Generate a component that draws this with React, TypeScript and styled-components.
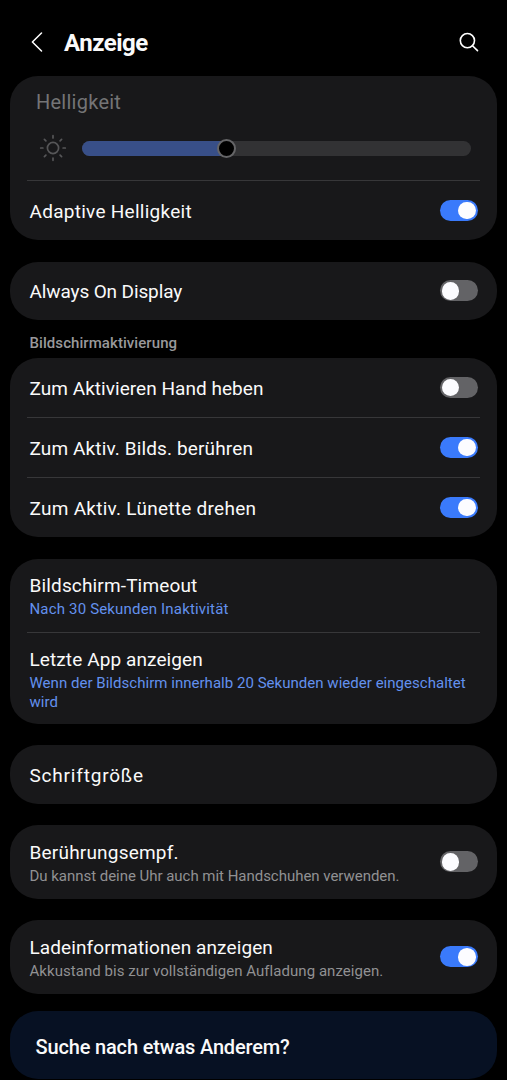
import React, { useState } from 'react';
import styled, { createGlobalStyle } from 'styled-components';

const GlobalStyle = createGlobalStyle`
  * { box-sizing: border-box; }
  html, body { margin: 0; padding: 0; background: #000; }
  body { font-family: Roboto, "Noto Sans", sans-serif; color: #fafafa; }
`;

const Page = styled.main`
  width: 507px;
  height: 1080px;
  padding: 0 10.5px 1px 10px;
  display: flex;
  flex-direction: column;
  overflow: hidden;
  background: #000;
`;

const Header = styled.header`
  height: 76px;
  flex: none;
  display: flex;
  align-items: center;
  padding: 10px 17.5px 0 21px;
`;

const BackIcon = styled.svg`
  width: 12px;
  height: 20px;
  margin-top: -2px;
`;

const SearchIcon = styled.svg`
  width: 20px;
  height: 20px;
  margin: -2px 0 0 auto;
`;

const Title = styled.h1<{ $track?: number }>`
  margin: 0 0 0 21px;
  font-size: 24px;
  line-height: 30px;
  font-weight: 700;
  letter-spacing: ${p => p.$track ?? 0}px;
`;

const Card = styled.section<{ $h: number; $gap?: number; $blue?: boolean }>`
  flex: none;
  height: ${p => p.$h}px;
  margin-top: ${p => p.$gap ?? 0}px;
  padding: 0 17px;
  border-radius: 28px;
  background: ${p => (p.$blue ? '#071123' : '#18181a')};
  display: flex;
  flex-direction: column;
`;

const Row = styled.div<{ $line?: boolean; $h?: number }>`
  flex: ${p => (p.$h ? `0 0 ${p.$h}px` : '1')};
  min-height: 0;
  display: flex;
  align-items: center;
  padding: 0 2px 0 2.5px;
  border-top: ${p => (p.$line ? '1px solid #373739' : 'none')};
`;

const Texts = styled.div<{ $drop?: number }>`
  flex: 1;
  display: flex;
  flex-direction: column;
  padding-top: ${p => p.$drop ?? 2}px;
`;

const Label = styled.span<{ $track?: number }>`
  font-size: 19px;
  line-height: 24px;
  white-space: nowrap;
  letter-spacing: ${p => p.$track ?? 0}px;
`;

const Note = styled.span<{ $track?: number; $accent?: boolean }>`
  font-size: 15px;
  line-height: 19px;
  margin-top: 2px;
  white-space: nowrap;
  color: ${p => (p.$accent ? '#6391ee' : '#919193')};
  letter-spacing: ${p => p.$track ?? 0}px;

  & + & { margin-top: 0; }
`;

const SectionTitle = styled.h2<{ $track?: number }>`
  flex: none;
  height: 38px;
  margin: 0;
  padding: 14px 0 0 19.5px;
  font-size: 15px;
  line-height: 19px;
  font-weight: 500;
  color: #99999b;
  letter-spacing: ${p => p.$track ?? 0}px;
`;

const SwitchTrack = styled.button<{ $on: boolean }>`
  flex: none;
  width: 37.5px;
  height: 21px;
  padding: 1.75px;
  border: 0;
  border-radius: 11px;
  display: flex;
  justify-content: ${p => (p.$on ? 'flex-end' : 'flex-start')};
  background: ${p => (p.$on ? '#3a7afb' : '#636366')};
`;

const Knob = styled.span`
  width: 17.5px;
  height: 17.5px;
  border-radius: 50%;
  background: #fcfcff;
`;

const Brightness = styled.div`
  height: 104px;
  flex: none;
  padding: 13px 8.5px 0 9px;
  display: flex;
  flex-direction: column;
`;

const BrightnessLabel = styled.span<{ $track?: number }>`
  font-size: 20px;
  line-height: 26px;
  color: #747476;
  letter-spacing: ${p => p.$track ?? 0}px;
`;

const SliderRow = styled.div`
  display: flex;
  align-items: center;
  height: 28px;
  margin-top: 19px;
`;

const SunIcon = styled.svg`
  width: 28px;
  height: 28px;
  margin: 0 15.5px 0 2.5px;
`;

const SliderTrack = styled.div`
  flex: 1;
  height: 15px;
  border-radius: 8px;
  background: #323234;
  display: flex;
  align-items: center;
`;

const SliderFill = styled.div`
  height: 15px;
  border-radius: 8px 0 0 8px;
  background: #384f88;
`;

const SliderThumb = styled.div`
  flex: none;
  width: 19px;
  height: 19px;
  margin-left: -10px;
  border-radius: 50%;
  border: 2px solid #656567;
  background: #000;
`;

const SearchPrompt = styled.a`
  padding: 22px 0 0 8.5px;
  font-size: 20px;
  line-height: 28px;
  font-weight: 500;
  letter-spacing: -0.16px;
`;

function Switch({ initial }: { initial: boolean }) {
  const [on, setOn] = useState(initial);
  return (
    <SwitchTrack type="button" role="switch" aria-checked={on} $on={on} onClick={() => setOn(!on)}>
      <Knob />
    </SwitchTrack>
  );
}

type ItemProps = {
  label: string;
  track?: number;
  note?: string[];
  noteTrack?: number;
  accent?: boolean;
  on?: boolean;
  line?: boolean;
  height?: number;
  drop?: number;
};

function Item({ label, track, note, noteTrack, accent, on, line, height, drop }: ItemProps) {
  return (
    <Row $line={line} $h={height}>
      <Texts $drop={drop}>
        <Label $track={track}>{label}</Label>
        {note?.map(text => (
          <Note key={text} $track={noteTrack} $accent={accent}>{text}</Note>
        ))}
      </Texts>
      {on !== undefined && <Switch initial={on} />}
    </Row>
  );
}

export default function App() {
  const brightness = 37.4;
  return (
    <>
      <GlobalStyle />
      <Page>
        <Header>
          <BackIcon viewBox="0 0 12 20" fill="none" stroke="#fff" strokeWidth="1.5" strokeLinecap="round" strokeLinejoin="round">
            <path d="M10.5 1 1.4 10l9.1 9" />
          </BackIcon>
          <Title $track={-0.5}>Anzeige</Title>
          <SearchIcon viewBox="0 0 20 20" fill="none" stroke="#fff" strokeWidth="1.6" strokeLinecap="round">
            <circle cx="8.4" cy="8.6" r="7.1" />
            <path d="m13.5 13.7 5 4.9" />
          </SearchIcon>
        </Header>

        <Card $h={164}>
          <Brightness>
            <BrightnessLabel $track={0.25}>Helligkeit</BrightnessLabel>
            <SliderRow>
              <SunIcon viewBox="-14 -14 28 28" fill="none" stroke="#565658" strokeWidth="1.7" strokeLinecap="round">
                <circle r="5.6" />
                <path d="M0-12.3v2.2M0 10.1v2.2M-12.3 0h2.2M10.1 0h2.2M-8.6-8.6l1.5 1.5M7.1 7.1l1.5 1.5M-8.6 8.6l1.5-1.5M7.1-7.1l1.5-1.5" />
              </SunIcon>
              <SliderTrack>
                <SliderFill style={{ width: `${brightness}%` }} />
                <SliderThumb />
              </SliderTrack>
            </SliderRow>
          </Brightness>
          <Item label="Adaptive Helligkeit" track={0.27} on={true} line />
        </Card>

        <Card $h={58.5} $gap={21.5}>
          <Item label="Always On Display" track={-0.12} on={false} />
        </Card>

        <SectionTitle $track={0.07}>Bildschirmaktivierung</SectionTitle>
        <Card $h={179}>
          <Item label="Zum Aktivieren Hand heben" track={0.04} on={false} />
          <Item label="Zum Aktiv. Bilds. berühren" track={0.13} on={true} line />
          <Item label="Zum Aktiv. Lünette drehen" track={0.27} on={true} line />
        </Card>

        <Card $h={165} $gap={21.5}>
          <Item
            label="Bildschirm-Timeout"
            track={0.15}
            note={['Nach 30 Sekunden Inaktivität']}
            noteTrack={0.17}
            accent
            height={73}
          />
          <Item
            label="Letzte App anzeigen"
            track={0.1}
            note={['Wenn der Bildschirm innerhalb 20 Sekunden wieder eingeschaltet', 'wird']}
            noteTrack={0.03}
            accent
            line
            drop={4}
          />
        </Card>

        <Card $h={59} $gap={21.5}>
          <Item label="Schriftgröße" track={0.8} />
        </Card>

        <Card $h={73.5} $gap={21}>
          <Item
            label="Berührungsempf."
            track={0.2}
            note={['Du kannst deine Uhr auch mit Handschuhen verwenden.']}
            noteTrack={-0.03}
            on={false}
            drop={3}
          />
        </Card>

        <Card $h={73.5} $gap={21.5}>
          <Item
            label="Ladeinformationen anzeigen"
            track={0.1}
            note={['Akkustand bis zur vollständigen Aufladung anzeigen.']}
            noteTrack={0.05}
            on={true}
            drop={3}
          />
        </Card>

        <Card $h={68.5} $gap={17} $blue>
          <SearchPrompt>Suche nach etwas Anderem?</SearchPrompt>
        </Card>
      </Page>
    </>
  );
}
